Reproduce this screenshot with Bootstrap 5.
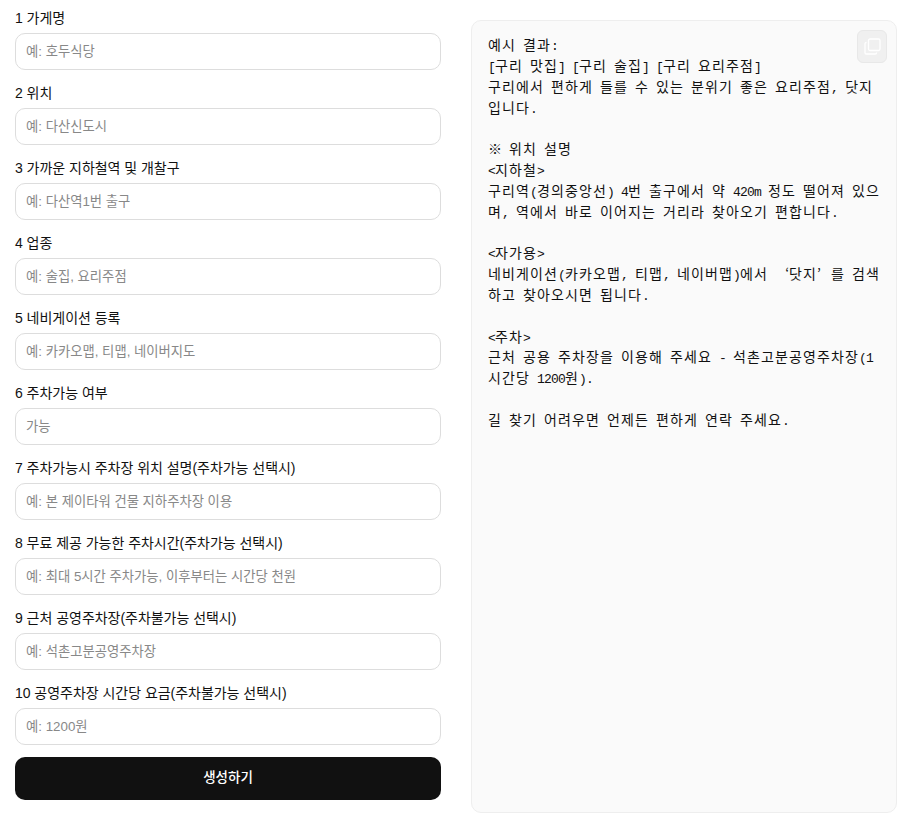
<!DOCTYPE html>
<html lang="ko">
<head>
  <meta charset="UTF-8">
  <meta name="viewport" content="width=device-width, initial-scale=1.0">
  <title>생성기</title>
  <link href="https://cdn.jsdelivr.net/npm/bootstrap@5.3.0/dist/css/bootstrap.min.css" rel="stylesheet">
  <style>
    body {
      font-family: "Liberation Sans", "Noto Sans CJK KR", sans-serif;
      font-size: 14px;
      color: #111;
      background: #fff;
    }
    .page-wrap {
      width: 882px;
      margin-left: 15px;
      gap: 30px;
    }
    .form-side {
      width: 426px;
      flex: none;
      padding-top: 8px;
    }
    .field-label {
      font-size: 14px;
      line-height: 20px;
      margin-bottom: 5px;
      color: #111;
      letter-spacing: -0.03px;
    }
    .field-box {
      height: 37px;
      border: 1px solid #ddd;
      border-radius: 10px;
      padding: 0 10px 1px;
      font-size: 13.333px;
      margin-bottom: 13px;
    }
    .field-box::placeholder {
      color: #888;
    }
    .make-btn {
      height: 43px;
      margin-top: -1px;
      background: #111;
      color: #fff;
      border: 0;
      border-radius: 10px;
      font-size: 13.5px;
      font-weight: 500;
    }
    .result-side {
      width: 426px;
      flex: none;
      height: 793px;
      margin-top: 20px;
      background: #fafafa;
      border: 1px solid #eee;
      border-radius: 10px;
      padding: 16.4px 15px 16px 16px;
    }
    /* half width latin + full width hangul, like a gulimche style font */
    .result-text {
      font-family: "Liberation Mono", "Noto Sans CJK KR", monospace;
      font-size: 13px;
      letter-spacing: -0.8px;
      line-height: 20.8px;
      color: #111;
    }
    .result-line {
      height: 20.8px;
      white-space: pre;
    }
    .wide-run {
      font-size: 14px;
      line-height: 1;
      letter-spacing: 1.12px;
    }
    .wide-sign {
      display: inline-block;
      width: 14px;
      font-family: "Noto Sans CJK KR", sans-serif;
      font-size: 14px;
      line-height: 1;
      letter-spacing: 0;
      text-align: center;
    }
    .sign-open {
      text-align: right;
    }
    .sign-close {
      text-align: left;
    }
    .copy-btn {
      position: absolute;
      top: 9px;
      right: 9px;
      width: 30px;
      height: 33px;
      background: #f0f0f0;
      border: 1px solid #e8e8e8;
      border-radius: 6px;
    }
  </style>
</head>
<body>
  <div class="page-wrap d-flex align-items-start">
    <form class="form-side">
      <label class="field-label d-block">1 가게명</label>
      <input class="field-box form-control shadow-none" placeholder="예: 호두식당">
      <label class="field-label d-block">2 위치</label>
      <input class="field-box form-control shadow-none" placeholder="예: 다산신도시">
      <label class="field-label d-block">3 가까운 지하철역 및 개찰구</label>
      <input class="field-box form-control shadow-none" placeholder="예: 다산역1번 출구">
      <label class="field-label d-block">4 업종</label>
      <input class="field-box form-control shadow-none" placeholder="예: 술집, 요리주점">
      <label class="field-label d-block">5 네비게이션 등록</label>
      <input class="field-box form-control shadow-none" placeholder="예: 카카오맵, 티맵, 네이버지도">
      <label class="field-label d-block">6 주차가능 여부</label>
      <input class="field-box form-control shadow-none" placeholder="가능">
      <label class="field-label d-block">7 주차가능시 주차장 위치 설명(주차가능 선택시)</label>
      <input class="field-box form-control shadow-none" placeholder="예: 본 제이타워 건물 지하주차장 이용">
      <label class="field-label d-block">8 무료 제공 가능한 주차시간(주차가능 선택시)</label>
      <input class="field-box form-control shadow-none" placeholder="예: 최대 5시간 주차가능, 이후부터는 시간당 천원">
      <label class="field-label d-block">9 근처 공영주차장(주차불가능 선택시)</label>
      <input class="field-box form-control shadow-none" placeholder="예: 석촌고분공영주차장">
      <label class="field-label d-block">10 공영주차장 시간당 요금(주차불가능 선택시)</label>
      <input class="field-box form-control shadow-none" placeholder="예: 1200원">
      <button type="button" class="make-btn btn w-100">생성하기</button>
    </form>
    <div class="result-side position-relative">
      <button type="button" class="copy-btn btn p-0 d-flex align-items-center justify-content-center" aria-label="복사">
        <svg width="17" height="17" viewBox="0 0 17 17" fill="none" stroke="#fff" stroke-width="1.3">
          <rect x="4.5" y="1" width="11.5" height="11.5" rx="1.5"/>
          <path d="M2.5 4.5H2.2C1.5 4.5 1 5 1 5.7V14.8C1 15.5 1.5 16 2.2 16H11.3C12 16 12.5 15.5 12.5 14.8V14.5"/>
        </svg>
      </button>
      <div class="result-text">
        <div class="result-line">예시 결과:</div>
        <div class="result-line">[구리 맛집] [구리 술집] [구리 요리주점]</div>
        <div class="result-line">구리에서 편하게 들를 수 있는 분위기 좋은 요리주점, 닷지</div>
        <div class="result-line">입니다.</div>
        <div class="result-line"></div>
        <div class="result-line">※ 위치 설명</div>
        <div class="result-line">&lt;지하철&gt;</div>
        <div class="result-line">구리역(경의중앙선) 4번 출구에서 약 420m 정도 떨어져 있으</div>
        <div class="result-line">며, 역에서 바로 이어지는 거리라 찾아오기 편합니다.</div>
        <div class="result-line"></div>
        <div class="result-line">&lt;자가용&gt;</div>
        <div class="result-line">네비게이션(카카오맵, 티맵, 네이버맵)에서 ‘닷지’를 검색</div>
        <div class="result-line">하고 찾아오시면 됩니다.</div>
        <div class="result-line"></div>
        <div class="result-line">&lt;주차&gt;</div>
        <div class="result-line">근처 공용 주차장을 이용해 주세요 - 석촌고분공영주차장(1</div>
        <div class="result-line">시간당 1200원).</div>
        <div class="result-line"></div>
        <div class="result-line">길 찾기 어려우면 언제든 편하게 연락 주세요.</div>
      </div>
    </div>
  </div>
  <script src="https://cdn.jsdelivr.net/npm/bootstrap@5.3.0/dist/js/bootstrap.bundle.min.js"></script>
  <script>
    // Hangul runs get their own letter spacing so each syllable takes two latin widths
    document.querySelectorAll('.result-line').forEach(line => {
      line.innerHTML = line.innerHTML
        .replace(/[\uAC00-\uD7A3]+/g, m => `<span class="wide-run">${m}</span>`)
        .replace(/※/g, '<span class="wide-sign">※</span>')
        .replace(/‘/g, '<span class="wide-sign sign-open">‘</span>')
        .replace(/’/g, '<span class="wide-sign sign-close">’</span>');
    });
  </script>
</body>
</html>
